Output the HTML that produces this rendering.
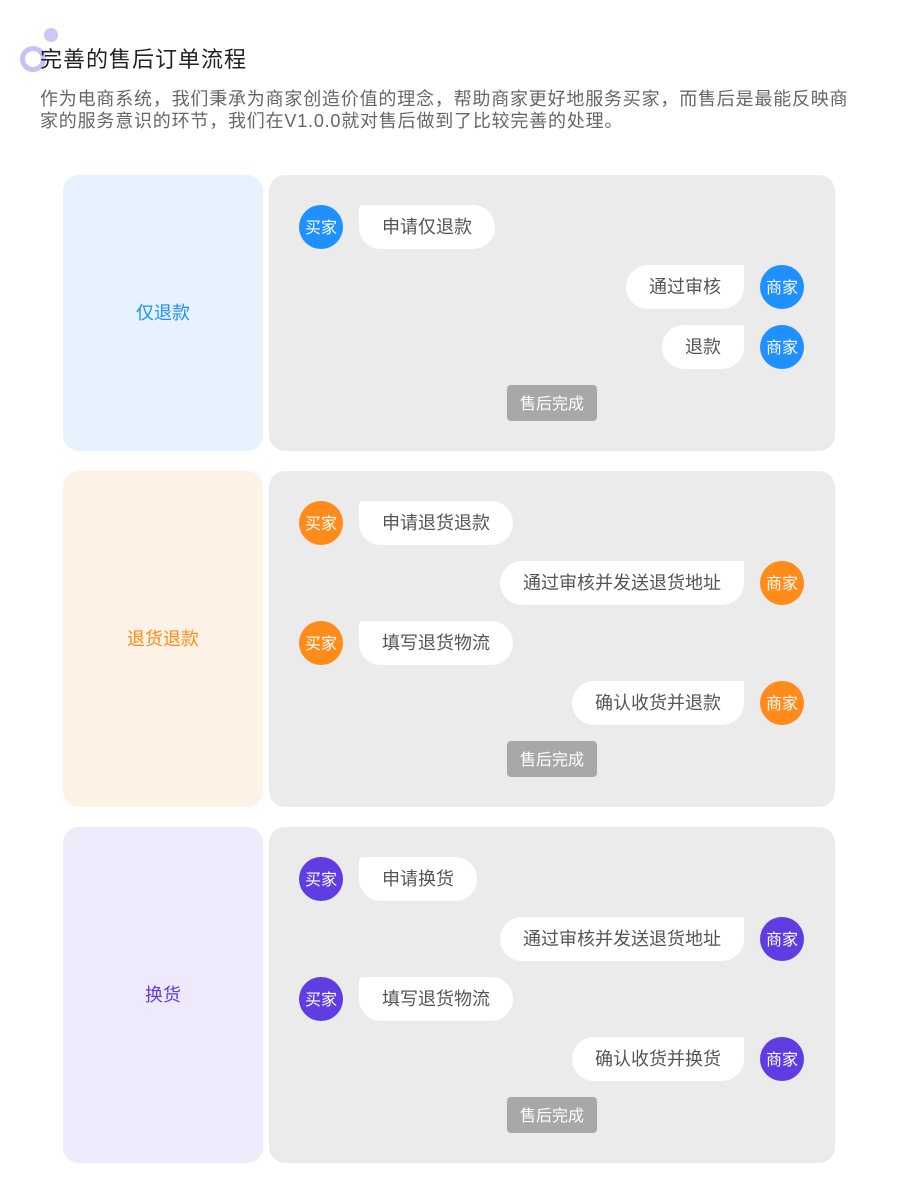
<!DOCTYPE html>
<html><head><meta charset="utf-8"><style>
*{margin:0;padding:0;box-sizing:border-box}
body{width:900px;height:1179px;background:#fff;position:relative;font-family:"Liberation Sans","Noto Sans CJK SC",sans-serif;overflow:hidden}
.a{position:absolute}
h1{position:absolute;left:40px;top:46px;font-size:22px;letter-spacing:1px;font-weight:normal;color:#222;line-height:28px}
p.d{position:absolute;left:40px;top:88px;width:816px;font-size:18px;letter-spacing:0.8px;line-height:22px;color:#666}
.lp{position:absolute;left:63px;width:200px;border-radius:16px;display:flex;align-items:center;justify-content:center;font-size:18px;padding-bottom:3px}
.rp{position:absolute;left:269px;width:566px;border-radius:16px;background:#ebebeb}
.av{position:absolute;width:44px;height:44px;border-radius:50%;color:#fff;font-size:16px;display:flex;align-items:center;justify-content:center;padding-bottom:3px}
.bb{position:absolute;height:44px;background:#fff;font-size:18px;color:#555;display:flex;align-items:center;padding:0 23px 2px}
.L .av{left:30px}.L .bb{left:90px;border-radius:4px 22px 22px 22px}
.R .av{right:31px}.R .bb{right:91px;border-radius:22px 0 22px 22px}
.row{position:absolute;left:0;right:0;height:44px}
.tag{position:absolute;left:238px;width:90px;height:36px;background:#a8a8a8;color:#fff;border-radius:4px;font-size:16px;display:flex;align-items:center;justify-content:center;padding-bottom:3px}
</style></head><body>
<div class="a" style="left:44px;top:28px;width:14px;height:14px;border-radius:50%;background:#cfc6fa"></div>
<div class="a" style="left:20px;top:46px;width:26px;height:26px;border-radius:50%;border:5px solid #cbbffa"></div>
<h1>完善的售后订单流程</h1>
<p class="d">作为电商系统，我们秉承为商家创造价值的理念，帮助商家更好地服务买家，而售后是最能反映商家的服务意识的环节，我们在V1.0.0就对售后做到了比较完善的处理。</p>

<div class="lp" style="top:175px;height:276px;background:#e6f2fe;color:#1e90ff">仅退款</div>
<div class="rp" style="top:175px;height:276px">
<div class="row L" style="top:30px"><div class="av" style="background:#1e90ff">买家</div><div class="bb">申请仅退款</div></div>
<div class="row R" style="top:90px"><div class="av" style="background:#1e90ff">商家</div><div class="bb">通过审核</div></div>
<div class="row R" style="top:150px"><div class="av" style="background:#1e90ff">商家</div><div class="bb">退款</div></div>
<div class="tag" style="top:210px">售后完成</div>
</div>

<div class="lp" style="top:471px;height:336px;background:#fef2e6;color:#ff8c1a">退货退款</div>
<div class="rp" style="top:471px;height:336px">
<div class="row L" style="top:30px"><div class="av" style="background:#ff8c1a">买家</div><div class="bb">申请退货退款</div></div>
<div class="row R" style="top:90px"><div class="av" style="background:#ff8c1a">商家</div><div class="bb">通过审核并发送退货地址</div></div>
<div class="row L" style="top:150px"><div class="av" style="background:#ff8c1a">买家</div><div class="bb">填写退货物流</div></div>
<div class="row R" style="top:210px"><div class="av" style="background:#ff8c1a">商家</div><div class="bb">确认收货并退款</div></div>
<div class="tag" style="top:270px">售后完成</div>
</div>

<div class="lp" style="top:827px;height:336px;background:#eeeafb;color:#5f3de3">换货</div>
<div class="rp" style="top:827px;height:336px">
<div class="row L" style="top:30px"><div class="av" style="background:#5f3de3">买家</div><div class="bb">申请换货</div></div>
<div class="row R" style="top:90px"><div class="av" style="background:#5f3de3">商家</div><div class="bb">通过审核并发送退货地址</div></div>
<div class="row L" style="top:150px"><div class="av" style="background:#5f3de3">买家</div><div class="bb">填写退货物流</div></div>
<div class="row R" style="top:210px"><div class="av" style="background:#5f3de3">商家</div><div class="bb">确认收货并换货</div></div>
<div class="tag" style="top:270px">售后完成</div>
</div>
</body></html>
